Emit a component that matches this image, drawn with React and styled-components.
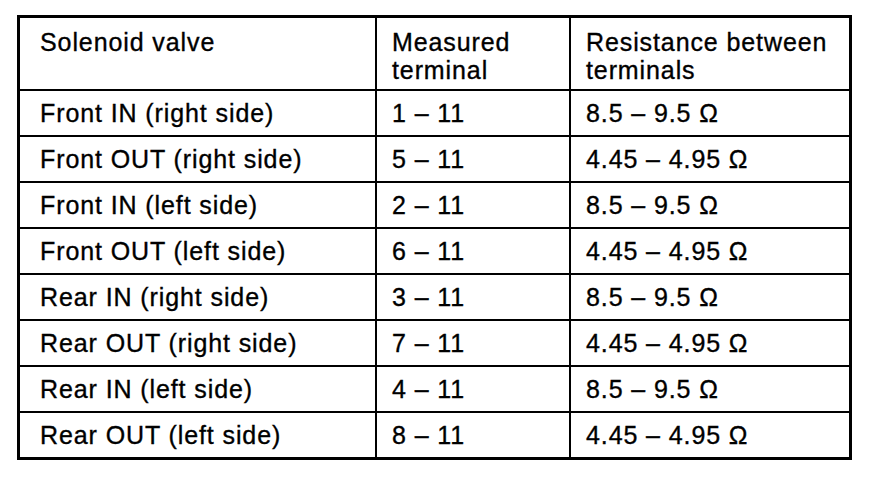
import React from 'react';
import styled, {createGlobalStyle} from 'styled-components';

const GlobalStyle = createGlobalStyle`
    html, body{
        margin: 0;
        padding: 0;
        background: #ffffff;
    }
    body{
        font-family: "Liberation Sans", Arial, sans-serif;
        color: #000;
    }
`;

const Page = styled.div`
    width: 896px;
    height: 490px;
    padding: 15px 0 0 17px;
    box-sizing: border-box;
`;

const Grid = styled.div`
    display: grid;
    grid-template-columns: 357px 194px 1fr;
    grid-template-rows: 73px repeat(7, 46px) 44px;
    width: 835px;
    box-sizing: border-box;
    border: 3px solid #000;
`;

const Cell = styled.div`
    display: flex;
    align-items: ${props => props.head ? 'flex-start' : 'center'};
    box-sizing: border-box;
    padding: ${props => props.head ? '10px' : '0'} 0 0 ${props => props.first ? '20px' : '15px'};
    border-right: ${props => props.end ? 'none' : '2px solid #000'};
    border-bottom: ${props => props.bottom ? 'none' : '2px solid #000'};
    font-size: 25px;
    line-height: 28px;
    letter-spacing: 0.9px;
    -webkit-text-stroke: 0.35px #000;
    white-space: pre-line;
`;

const rows = [
    ['Front IN (right side)', '1 – 11', '8.5 – 9.5 Ω'],
    ['Front OUT (right side)', '5 – 11', '4.45 – 4.95 Ω'],
    ['Front IN (left side)', '2 – 11', '8.5 – 9.5 Ω'],
    ['Front OUT (left side)', '6 – 11', '4.45 – 4.95 Ω'],
    ['Rear IN (right side)', '3 – 11', '8.5 – 9.5 Ω'],
    ['Rear OUT (right side)', '7 – 11', '4.45 – 4.95 Ω'],
    ['Rear IN (left side)', '4 – 11', '8.5 – 9.5 Ω'],
    ['Rear OUT (left side)', '8 – 11', '4.45 – 4.95 Ω'],
];

const header = ['Solenoid valve', 'Measured\nterminal', 'Resistance between\nterminals'];

export default function App(){
    return(
        <Page>
            <GlobalStyle/>
            <Grid>
                {header.map((text, i) => (
                    <Cell key={'h' + i} head first={i === 0} end={i === 2}>{text}</Cell>
                ))}
                {rows.map((row, r) => row.map((text, i) => (
                    <Cell key={r + '-' + i} first={i === 0} end={i === 2} bottom={r === rows.length - 1}>{text}</Cell>
                )))}
            </Grid>
        </Page>
    )
}
